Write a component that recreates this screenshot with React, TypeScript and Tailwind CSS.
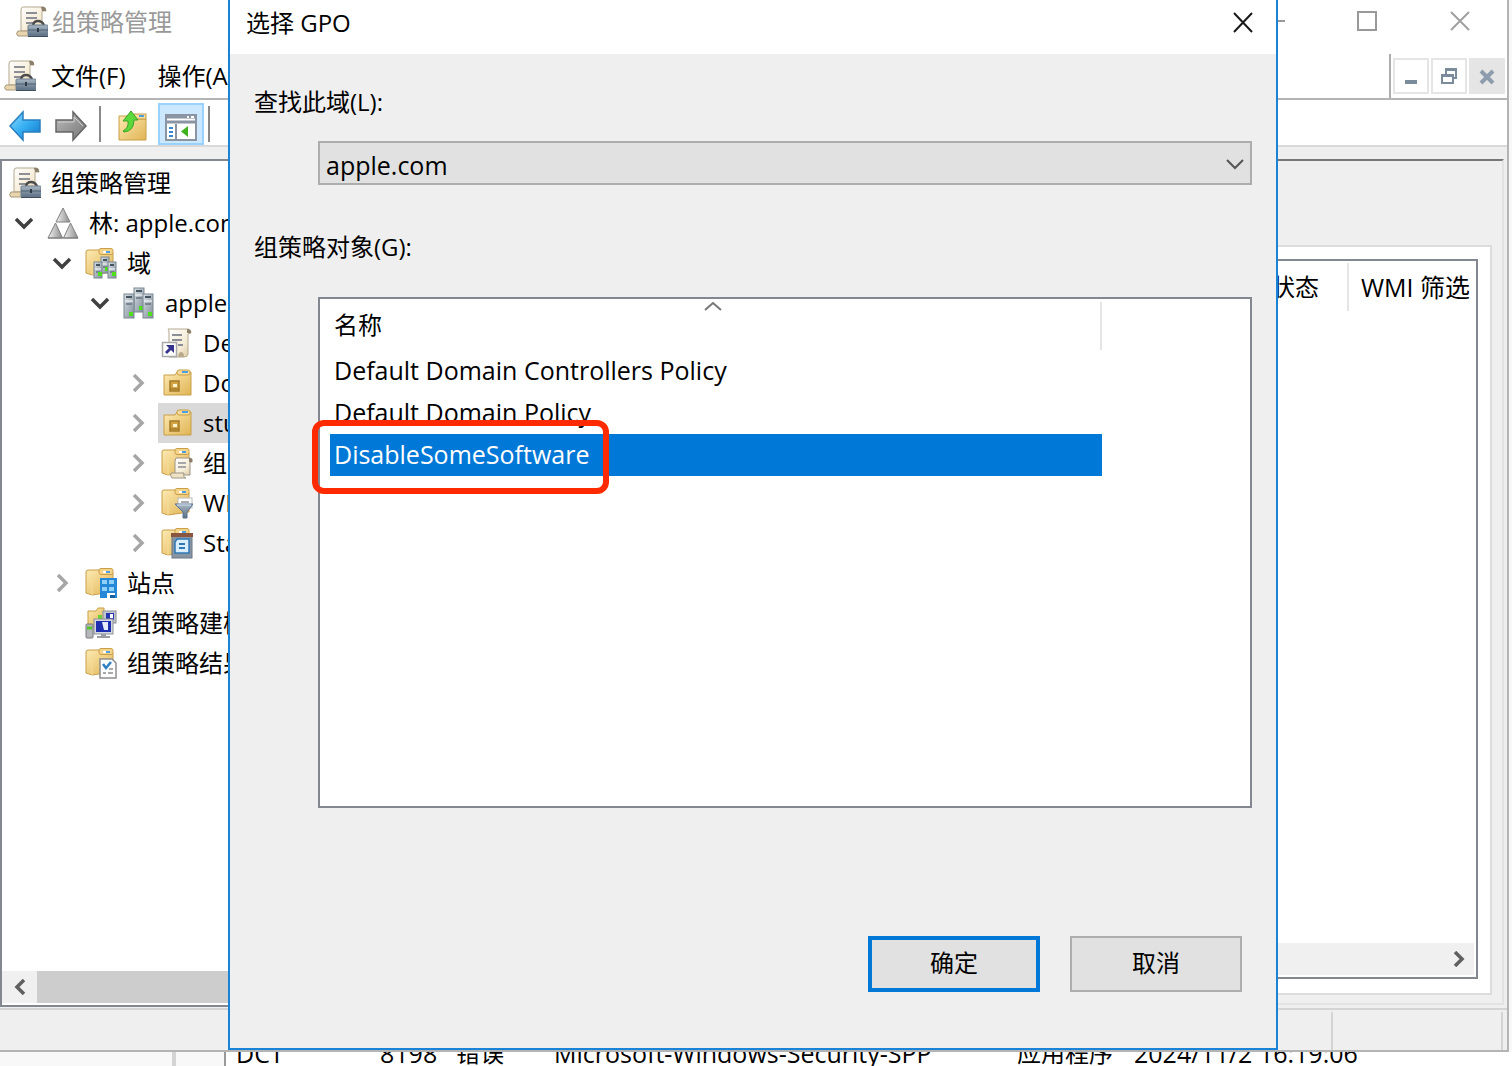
import { useState, type ReactNode } from "react";

// Shared gradients for all icons
function IconDefs() {
  return (
    <svg className="absolute h-0 w-0" aria-hidden="true">
      <defs>
        <linearGradient id="folder" x1="0" y1="0" x2="1" y2="1">
          <stop offset="0" stopColor="#fdeab2" />
          <stop offset="1" stopColor="#e0b454" />
        </linearGradient>
        <linearGradient id="paper" x1="0" y1="0" x2="1" y2="1">
          <stop offset="0" stopColor="#ffffff" />
          <stop offset="0.6" stopColor="#f6ecd6" />
          <stop offset="1" stopColor="#d9c6a0" />
        </linearGradient>
        <linearGradient id="steel" x1="0" y1="0" x2="0" y2="1">
          <stop offset="0" stopColor="#a9b7c4" />
          <stop offset="1" stopColor="#5b6f82" />
        </linearGradient>
        <linearGradient id="blue" x1="0" y1="0" x2="1" y2="1">
          <stop offset="0" stopColor="#8fdcff" />
          <stop offset="0.5" stopColor="#35aef2" />
          <stop offset="1" stopColor="#1173c8" />
        </linearGradient>
        <linearGradient id="grey" x1="0" y1="0" x2="1" y2="1">
          <stop offset="0" stopColor="#bdbdbd" />
          <stop offset="1" stopColor="#747474" />
        </linearGradient>
        <linearGradient id="silver" x1="0" y1="0" x2="1" y2="0">
          <stop offset="0" stopColor="#f2f2f2" />
          <stop offset="1" stopColor="#8c8c8c" />
        </linearGradient>
        <linearGradient id="server" x1="0" y1="0" x2="1" y2="1">
          <stop offset="0" stopColor="#d8e0e6" />
          <stop offset="1" stopColor="#7f8c98" />
        </linearGradient>
      </defs>
    </svg>
  );
}

function Svg({ children }: { children: ReactNode }) {
  return (
    <svg viewBox="0 0 32 32" className="h-8 w-8 shrink-0" aria-hidden="true">
      {children}
    </svg>
  );
}

function GpmIcon() {
  return (
    <Svg>
      <path d="M7 1h20q3 0 3 4h-4v20H5V4q0-3 2-3z" fill="url(#paper)" stroke="#b5a990" />
      <path d="M25 1q5-1 5 4h-4z" fill="#8b7f6c" />
      <path d="M10 7h11M10 12h11M10 17h7" stroke="#8c8f96" strokeWidth="2" />
      <path d="M2 25h14v5H2q-3-2 0-5z" fill="#e8d5ae" stroke="#a8987a" />
      <path d="M17 19q1-4 5-4t6 4" fill="none" stroke="#4b4b4b" strokeWidth="2.500" />
      <rect x="12" y="19" width="20" height="11" rx="1" fill="url(#steel)" stroke="#6c7f91" />
      <path d="M12 24h20" stroke="#4d5f70" />
      <rect x="21" y="22" width="2" height="4" fill="#303a44" />
      <path d="M12 30.500h20" stroke="#3f4e5d" />
    </Svg>
  );
}

function ForestIcon() {
  const tri = "url(#silver)";
  return (
    <Svg>
      <path d="M16 1l7 14H9z" fill={tri} stroke="#808080" />
      <path d="M8.500 16l7 15H1z" fill={tri} stroke="#808080" />
      <path d="M23.500 16L31 31H16.500z" fill={tri} stroke="#808080" />
      <path d="M1 31h30" stroke="#7a7a7a" />
    </Svg>
  );
}

function Folder() {
  return (
    <>
      <path d="M1 26V5q0-2 2-2h11l2 3h12v19L7 28z" fill="url(#folder)" stroke="#c99f49" />
      <path d="M7 28V7" stroke="#f7dc98" />
      <rect x="14" y="1.500" width="14" height="6" rx="2" fill="#f3d48a" stroke="#c99f49" />
      <path d="M18 5h3" stroke="#fff" strokeWidth="2" />
      <path d="M21 5h4" stroke="#4b9fe0" strokeWidth="2" />
    </>
  );
}

function Server({ x, y, w, h }: { x: number; y: number; w: number; h: number }) {
  return (
    <>
      <rect x={x} y={y} width={w} height={h} fill="url(#server)" stroke="#7b8792" />
      <path d={`M${x + 2} ${y + 3}h${w - 4}`} stroke="#465460" strokeWidth="2" />
      <path d={`M${x + 1} ${y + 7}h${w - 2}`} stroke="#ffffff" />
      <path d={`M${x + 2} ${y + 10}h${w - 4}`} stroke="#66737f" strokeWidth="1.500" />
      <rect x={x + w / 2} y={y + h - 6} width="4" height="4" fill="#4fe01c" />
    </>
  );
}

function DomainsIcon() {
  return (
    <Svg>
      <Folder />
      <Server x={16} y={10} w={8} h={16} />
      <Server x={9} y={15} w={8} h={16} />
      <Server x={23} y={15} w={8} h={16} />
    </Svg>
  );
}

function DomainIcon() {
  return (
    <Svg>
      <Server x={11} y={1} w={10} h={24} />
      <Server x={1} y={7} w={10} h={24} />
      <Server x={20} y={7} w={10} h={24} />
    </Svg>
  );
}

function GpoLinkIcon() {
  return (
    <Svg>
      <path d="M7 2h20q3 0 3 4l-3 1v20q0 3-4 3H8V6q0-3-1-4z" fill="url(#paper)" stroke="#b5a990" />
      <path d="M26 2q4 0 4 4h-4z" fill="#8b7f6c" />
      <path d="M11 8h10M11 13h10M17 18h5" stroke="#8c8f96" strokeWidth="2" />
      <path d="M18 30q-2-4 2-5q3 0 3 5z" fill="#b9a98c" />
      <rect x="1.500" y="15.500" width="14" height="14" fill="#fff" stroke="#a8a8a8" strokeWidth="1.500" />
      <path d="M5 18h8v8l-3-3-4 4-2-2 4-4z" fill="#34348e" />
    </Svg>
  );
}

function OuIcon() {
  return (
    <Svg>
      <path d="M3 28V8h11l2-3h14v23z" fill="url(#folder)" stroke="#c99f49" />
      <rect x="16" y="3" width="13" height="5" rx="2" fill="#f6dc9a" stroke="#c99f49" />
      <path d="M21 5h6" stroke="#4b9fe0" strokeWidth="2" />
      <rect x="9" y="14" width="9" height="10" fill="#d3a441" stroke="#a47c2b" strokeWidth="1.500" />
      <rect x="12" y="17" width="4" height="3" fill="#fff4cf" />
      <path d="M9 22h9" stroke="#8f6a1f" />
    </Svg>
  );
}

function GpoFolderIcon() {
  return (
    <Svg>
      <Folder />
      <path d="M15 11h14q3 0 2 4h-2v13H14V14z" fill="url(#paper)" stroke="#9d9584" />
      <path d="M28 11q4 0 3 4h-3z" fill="#8b7f6c" />
      <path d="M17 16h8M17 20h8" stroke="#8c8f96" strokeWidth="1.500" />
      <path d="M10 26h13q-1 5 2 5H11q-2-2-1-5z" fill="#f0e2c4" stroke="#9d9584" />
    </Svg>
  );
}

function WmiIcon() {
  return (
    <Svg>
      <Folder />
      <rect x="17" y="11" width="14" height="10" fill="#fff" stroke="#b9b9b9" />
      <path d="M20 15h8" stroke="#8c8f96" strokeWidth="1.500" />
      <path d="M14 17h18l-6 8v6h-4v-6z" fill="url(#steel)" stroke="#587394" />
      <path d="M16 18h14" stroke="#d5e4f2" />
    </Svg>
  );
}

function StarterIcon() {
  return (
    <Svg>
      <Folder />
      <rect x="11" y="8" width="20" height="23" fill="#8795a3" stroke="#6a7682" />
      <rect x="10" y="6" width="22" height="4" fill="#8a5640" />
      <path d="M16 12h12v14H14V15z" fill="#d9efff" stroke="#2f78b4" strokeWidth="1.500" />
      <path d="M18 17h6M18 21h6" stroke="#2f78b4" strokeWidth="2" />
    </Svg>
  );
}

function SitesIcon() {
  return (
    <Svg>
      <Folder />
      <rect x="15" y="11" width="17" height="20" fill="#2488d6" />
      <path d="M17 13h5v4h-5zM24 13h5v4h-5zM17 20h5v4h-5zM24 20h5v4h-5z" fill="#8fd0fa" />
      <path d="M22 26h8v5h-8z" fill="#fff" />
      <path d="M25 28h5v3h-5z" fill="#1560a0" />
    </Svg>
  );
}

function ModelingIcon() {
  return (
    <Svg>
      <path d="M3 20V4h8l2-3h6v19z" fill="url(#folder)" stroke="#c99f49" />
      <rect x="18" y="4" width="13" height="12" fill="#c3c6cc" stroke="#8b8f97" />
      <rect x="21" y="6" width="8" height="7" fill="#2436b0" />
      <path d="M25 7h3v4h-3z" fill="#fff" />
      <rect x="13" y="8" width="4" height="4" fill="#6ccf35" />
      <rect x="9" y="12" width="19" height="15" fill="#d4d7dd" stroke="#8b8f97" />
      <rect x="11" y="14" width="15" height="11" fill="#1d2fae" />
      <path d="M17 15h6v8h-4z" fill="#e6ecff" />
      <path d="M16 27h5v2h4v2H12v-2h4z" fill="#9a9da3" />
      <rect x="1" y="17" width="7" height="14" rx="1" fill="#b5b7ba" stroke="#77797d" />
      <path d="M2 21h5" stroke="#53c82c" strokeWidth="3" />
    </Svg>
  );
}

function ResultsIcon() {
  return (
    <Svg>
      <Folder />
      <path d="M15 12h12l4 4v15H15z" fill="#fff" stroke="#8f8f8f" strokeWidth="1.500" />
      <path d="M18 17l3 4 5-6" fill="none" stroke="#2d7fc4" strokeWidth="2.500" />
      <path d="M18 26h3M24 22h4M23 26h5" stroke="#8f8f8f" strokeWidth="1.500" />
    </Svg>
  );
}

function BackIcon() {
  return (
    <Svg>
      <path d="M1 16L14 2v8h17v12H14v8z" fill="url(#blue)" stroke="#2a7fc0" strokeWidth="1.500" />
    </Svg>
  );
}

function ForwardIcon() {
  return (
    <Svg>
      <path d="M31 16L18 2v8H1v12h17v8z" fill="url(#grey)" stroke="#666" strokeWidth="1.500" />
      <path d="M3 12h16V7l9 9" fill="none" stroke="#d0d0d0" />
    </Svg>
  );
}

function UpFolderIcon() {
  return (
    <Svg>
      <path d="M2 30V6h10l2 3h15v21z" fill="url(#folder)" stroke="#c99f49" />
      <rect x="17" y="4" width="12" height="5" fill="#f6dc9a" stroke="#c99f49" />
      <path d="M22 6h5" stroke="#4b9fe0" strokeWidth="2" />
      <path d="M6 21q6-3 5-10H6l8-10 7 9h-4q0 11-10 12z" fill="#5ad83c" stroke="#3aa324" />
    </Svg>
  );
}

function ConsoleTreeIcon() {
  return (
    <Svg>
      <rect x="1" y="4" width="30" height="25" fill="#fff" stroke="#8a94a3" strokeWidth="2" />
      <path d="M1 6h30M1 11h30" stroke="#8a94a3" strokeWidth="3" />
      <path d="M22 6h2M26 6h3" stroke="#fff" strokeWidth="2" />
      <path d="M11 13v15" stroke="#8a94a3" strokeWidth="2" />
      <path d="M4 17h4M4 21h4M4 25h4" stroke="#3b86d0" strokeWidth="2" />
      <path d="M23 15v11l-7-5.500z" fill="#3fb21d" />
    </Svg>
  );
}

function Chevron({ open }: { open: boolean }) {
  return (
    <svg viewBox="0 0 20 20" className="block h-5 w-5" aria-hidden="true">
      {open ? (
        <path d="M2 6l8 8 8-8" fill="none" stroke="#404040" strokeWidth="3.500" />
      ) : (
        <path d="M6 2l8 8-8 8" fill="none" stroke="#a6a6a6" strokeWidth="3.500" />
      )}
    </svg>
  );
}

type Node = {
  label: string;
  level: number;
  icon: () => ReactNode;
  state?: "open" | "closed";
  selected?: boolean;
};

const tree: Node[] = [
  { label: "林: apple.com", level: 0, icon: ForestIcon, state: "open" },
  { label: "域", level: 1, icon: DomainsIcon, state: "open" },
  { label: "apple.com", level: 2, icon: DomainIcon, state: "open" },
  { label: "Default Domain Policy", level: 3, icon: GpoLinkIcon },
  { label: "Domain Controllers", level: 3, icon: OuIcon, state: "closed" },
  { label: "student", level: 3, icon: OuIcon, state: "closed", selected: true },
  { label: "组策略对象", level: 3, icon: GpoFolderIcon, state: "closed" },
  { label: "WMI 筛选器", level: 3, icon: WmiIcon, state: "closed" },
  { label: "Starter GPO", level: 3, icon: StarterIcon, state: "closed" },
  { label: "站点", level: 1, icon: SitesIcon, state: "closed" },
  { label: "组策略建模", level: 1, icon: ModelingIcon },
  { label: "组策略结果", level: 1, icon: ResultsIcon },
];

const indents = ["pl-[7px]", "pl-[45px]", "pl-[83px]", "pl-[121px]"];

const policies = [
  "Default Domain Controllers Policy",
  "Default Domain Policy",
  "DisableSomeSoftware",
];

function TreePanel() {
  return (
    <nav className="flex w-[320px] shrink-0 flex-col border-2 border-[#828790] bg-white">
      <div className="flex-1 overflow-hidden pt-0.5">
        <div className="flex h-10 items-center gap-2.5 pl-[7px]">
          <GpmIcon />
          <span>组策略管理</span>
        </div>
        {tree.map((node, i) => (
          <div key={i} className={`flex h-10 items-center ${indents[node.level]}`}>
            <span className="mr-[5px] flex w-[30px] shrink-0 justify-center">
              {node.state && (
                <button aria-label={node.label}>
                  <Chevron open={node.state === "open"} />
                </button>
              )}
            </span>
            <span
              className={`flex h-10 flex-1 items-center gap-2.5 pl-[3px] ${node.selected ? "bg-[#d9d9d9]" : ""}`}
            >
              <node.icon />
              <span>{node.label}</span>
            </span>
          </div>
        ))}
      </div>
      <div className="mb-0.5 flex h-8 bg-[#f0f0f0]">
        <button aria-label="向左滚动" className="flex w-[35px] items-center justify-center">
          <svg viewBox="0 0 12 16" className="h-4 w-3" aria-hidden="true">
            <path d="M10 1L3 8l7 7" fill="none" stroke="#606060" strokeWidth="3.500" />
          </svg>
        </button>
        <div className="flex-1 bg-[#cdcdcd]" />
      </div>
    </nav>
  );
}

function DetailPanel() {
  return (
    <section className="mr-[3px] mb-0.5 flex flex-1 flex-col border-t-2 border-r-2 border-b-2 border-t-[#777] border-r-[#e3e3e3] border-b-[#e3e3e3] pt-[84px] pr-2.5 pb-2">
      <div className="flex flex-1 flex-col border-2 border-[#dcdcdc] bg-white px-3 pt-3 pb-3.5">
        <div className="flex flex-1 flex-col border-2 border-[#828790]">
          <div className="flex h-[50px] pt-0.5">
            <div className="flex flex-1 items-center justify-end border-r-2 border-[#e5e5e5] pr-7">状态</div>
            <div className="flex w-[127px] items-center pl-3 text-[25px]">WMI 筛选</div>
          </div>
          <div className="flex-1" />
          <div className="mr-0.5 mb-0.5 flex h-8 justify-end bg-[#f0f0f0]">
            <button aria-label="向右滚动" className="flex w-[30px] items-center justify-center">
              <svg viewBox="0 0 12 16" className="h-4 w-3" aria-hidden="true">
                <path d="M2 1l7 7-7 7" fill="none" stroke="#606060" strokeWidth="3.500" />
              </svg>
            </button>
          </div>
        </div>
      </div>
    </section>
  );
}

function WindowButtons() {
  return (
    <div className="flex">
      <button aria-label="最小化" className="flex w-[93px] justify-center">
        <svg viewBox="0 0 22 22" className="h-[22px] w-[22px]" aria-hidden="true">
          <path d="M1 10h20" stroke="#999" strokeWidth="2" />
        </svg>
      </button>
      <button aria-label="最大化" className="flex w-[93px] justify-center">
        <svg viewBox="0 0 22 22" className="h-[22px] w-[22px]" aria-hidden="true">
          <rect x="1" y="1" width="18" height="18" fill="none" stroke="#999" strokeWidth="2" />
        </svg>
      </button>
      <button aria-label="关闭" className="flex w-[93px] justify-center">
        <svg viewBox="0 0 22 22" className="h-[22px] w-[22px]" aria-hidden="true">
          <path d="M1 1l18 18M19 1L1 19" stroke="#a0a0a0" strokeWidth="2" />
        </svg>
      </button>
    </div>
  );
}

function MdiButtons() {
  return (
    <div className="flex items-center gap-0.5 border-l-2 border-[#adadad] pr-0.5 pl-0.5">
      <button aria-label="最小化子窗口" className="flex h-9 w-9 items-center justify-center border-2 border-[#e5e5e5]">
        <svg viewBox="0 0 18 18" className="h-[18px] w-[18px]" aria-hidden="true">
          <path d="M3 15h12" stroke="#7a8b9c" strokeWidth="4" />
        </svg>
      </button>
      <button aria-label="还原子窗口" className="flex h-9 w-9 items-center justify-center border-2 border-[#e5e5e5]">
        <svg viewBox="0 0 18 18" className="h-[18px] w-[18px]" aria-hidden="true">
          <path d="M6 7V2.500h10V11h-3" fill="none" stroke="#7a8b9c" strokeWidth="2" />
          <path d="M5 2.500h12" stroke="#7a8b9c" strokeWidth="3" />
          <rect x="2" y="8" width="11" height="8" fill="#fff" stroke="#7a8b9c" strokeWidth="2" />
          <path d="M1 8.500h13" stroke="#7a8b9c" strokeWidth="3" />
        </svg>
      </button>
      <button aria-label="关闭子窗口" className="flex h-9 w-9 items-center justify-center bg-[#e5e5e5]">
        <svg viewBox="0 0 18 18" className="h-[18px] w-[18px]" aria-hidden="true">
          <path d="M3 4l12 12M15 4L3 16" stroke="#8d9dad" strokeWidth="4" />
        </svg>
      </button>
    </div>
  );
}

function GpoDialog() {
  const [domain, setDomain] = useState("apple.com");
  const [selected, setSelected] = useState(2);

  return (
    <div
      role="dialog"
      aria-labelledby="dialog-title"
      className="absolute top-0 right-[234px] bottom-4 left-[228px] flex flex-col border-2 border-t-0 border-[#1883d7] bg-[#efefef]"
    >
      <div className="flex h-[54px] items-center justify-between bg-white pr-[22px] pb-2 pl-4">
        <h1 id="dialog-title">选择 GPO</h1>
        <button aria-label="关闭对话框">
          <svg viewBox="0 0 22 22" className="h-[22px] w-[22px]" aria-hidden="true">
            <path d="M2 1l18 19M20 1L2 20" stroke="#1a1a1a" strokeWidth="2" />
          </svg>
        </button>
      </div>

      <div className="flex flex-1 flex-col px-6 pt-8 pb-14">
        <label htmlFor="domain">查找此域(L):</label>
        <div className="relative mt-[23px] ml-16">
          <select
            id="domain"
            value={domain}
            onChange={(e) => setDomain(e.target.value)}
            className="block h-11 w-full appearance-none border-2 border-[#adadad] bg-[#e1e1e1] pt-1 pl-1.5 text-[25px] leading-8"
          >
            <option>apple.com</option>
          </select>
          <svg viewBox="0 0 18 18" className="pointer-events-none absolute top-3.5 right-2 h-[18px] w-[18px]" aria-hidden="true">
            <path d="M1 5l8 8 8-8" fill="none" stroke="#555" strokeWidth="2" />
          </svg>
        </div>

        <span id="gpo-label" className="mt-[46px]">组策略对象(G):</span>
        <div className="mt-[34px] ml-16 flex-1 border-2 border-[#828790] bg-white pl-2.5">
          <table aria-labelledby="gpo-label" className="w-[772px] text-[25px] leading-8">
            <thead>
              <tr className="h-[51px]">
                <th className="relative p-0 pl-1 text-left text-2xl leading-8 font-normal">
                  名称
                  <svg viewBox="0 0 18 10" className="absolute top-0.5 left-[374px] h-2.5 w-[18px]" aria-hidden="true">
                    <path d="M1 9l8-7 8 7" fill="none" stroke="#777" strokeWidth="2" />
                  </svg>
                  <span className="absolute top-[3px] right-0 h-12 w-0.5 bg-[#e5e5e5]" />
                </th>
              </tr>
            </thead>
            <tbody>
              {policies.map((name, i) => (
                <tr
                  key={name}
                  onClick={() => setSelected(i)}
                  className={`h-[42px] ${selected === i ? "bg-[#0078d7] text-white" : ""}`}
                >
                  <td className="relative p-0 pb-0.5 pl-1">
                    {name}
                    {selected === i && (
                      <span className="absolute -top-3.5 -left-[18px] h-[74px] w-[297px] rounded-xl border-6 border-[#ff2a00]" />
                    )}
                  </td>
                </tr>
              ))}
            </tbody>
          </table>
        </div>

        <div className="mt-32 mr-2.5 flex justify-end gap-[30px]">
          <button className="h-14 w-[172px] border-4 border-[#0078d7] bg-[#e1e1e1] pb-0.5">确定</button>
          <button className="h-14 w-[172px] border-2 border-[#adadad] bg-[#e1e1e1] pb-0.5">取消</button>
        </div>
      </div>
    </div>
  );
}

export default function App() {
  return (
    <main className="relative flex h-screen flex-col overflow-hidden bg-[#f8f8f8] font-['Open_Sans','Noto_Sans_CJK_SC',sans-serif] text-2xl leading-8 whitespace-nowrap text-black">
      <IconDefs />

      <div className="mr-[3px] flex flex-1 flex-col border-r-2 border-b-2 border-[#b4b4b4] bg-[#efefef]">
        {/* Title bar */}
        <header className="flex h-[54px] items-center justify-between bg-white pb-2.5 pl-4">
          <div className="flex items-center gap-1 text-[#999]">
            <GpmIcon />
            <span>组策略管理</span>
          </div>
          <WindowButtons />
        </header>

        {/* Menu bar */}
        <div className="flex h-[46px] justify-between border-b-2 border-[#b4b4b4] bg-white pl-1">
          <div className="flex items-center">
            <GpmIcon />
            <button className="ml-[15px]">文件(F)</button>
            <button className="ml-8">操作(A)</button>
          </div>
          <MdiButtons />
        </div>

        {/* Toolbar */}
        <div className="flex h-[47px] items-center border-b-2 border-[#d9d9d9] bg-white pt-[3px] pl-[9px]">
          <button aria-label="后退" className="pt-1">
            <BackIcon />
          </button>
          <button aria-label="前进" className="ml-3.5 pt-1">
            <ForwardIcon />
          </button>
          <span className="ml-3 h-9 w-0.5 bg-[#8a8a8a]" />
          <button aria-label="向上" className="ml-4 pt-1">
            <UpFolderIcon />
          </button>
          <button aria-label="显示控制台树" className="ml-[9px] flex h-[42px] w-[46px] items-center justify-center border-2 border-[#99d1ff] bg-[#cce8ff] pt-1.5">
            <ConsoleTreeIcon />
          </button>
          <span className="ml-1 h-9 w-0.5 bg-[#8a8a8a]" />
        </div>

        <div className="flex flex-1 pt-3">
          <TreePanel />
          <DetailPanel />
        </div>

        {/* Status bar */}
        <div className="mt-px flex h-[42px] justify-end border-t-2 border-[#d4d4d4] pt-0.5 pr-1">
          <div className="w-[172px] border-r-2 border-l-2 border-[#d4d4d4]" />
        </div>
      </div>

      {/* Event log row showing from behind */}
      <div className="flex h-3.5 items-end overflow-hidden bg-white text-[25px] leading-[26px]">
        <div className="flex h-full w-[226px] shrink-0 justify-end border-r-2 border-[#999] bg-[#f8f8f8]">
          <div className="mr-12 w-1 bg-[#d4d4d4]" />
        </div>
        <span className="w-[144px] shrink-0 pl-2.5">DCT</span>
        <span className="w-[86px] shrink-0 pl-2.5">8198</span>
        <span className="w-[98px] shrink-0 text-2xl leading-[26px]">错误</span>
        <span className="w-[463px] shrink-0">Microsoft-Windows-Security-SPP</span>
        <span className="w-[117px] shrink-0 text-2xl leading-[26px]">应用程序</span>
        <span>2024/11/2 16:19:06</span>
      </div>

      <GpoDialog />
    </main>
  );
}
